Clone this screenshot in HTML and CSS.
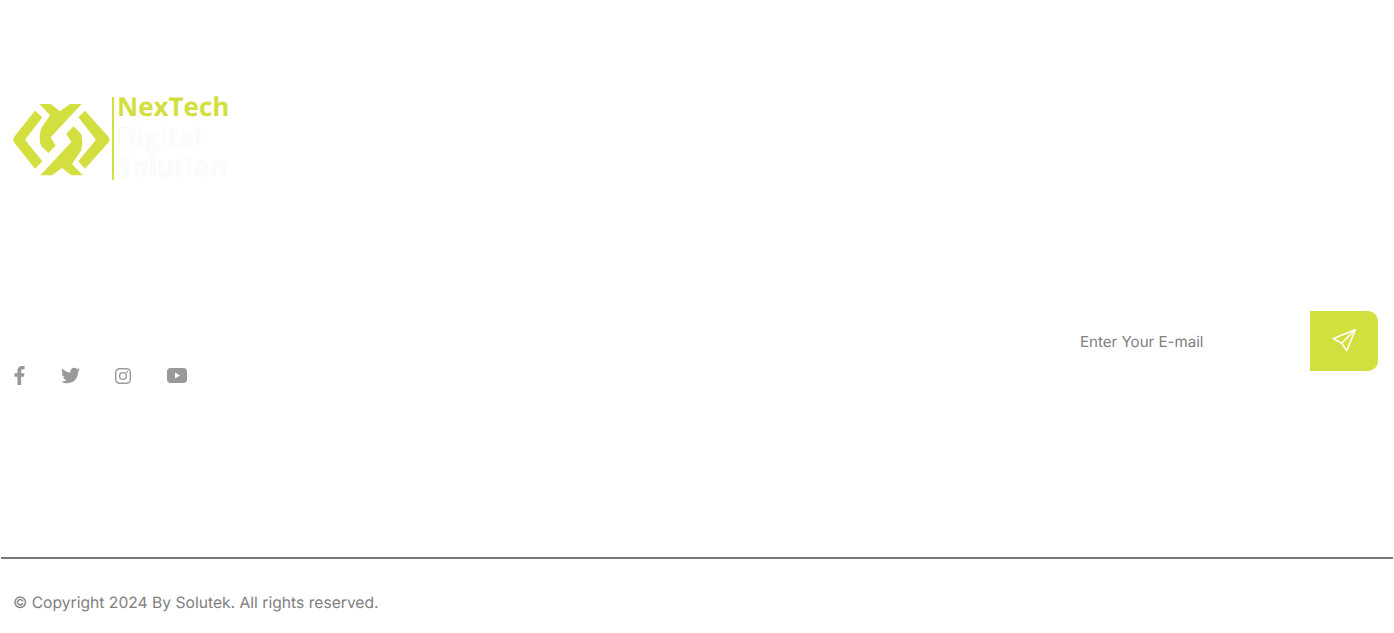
FILE: index.html
```html
<!DOCTYPE html>
<html lang="en">
<head>
    <meta charset="UTF-8">
    <title>Footer</title>
    <link rel="stylesheet" href="styles.css">
</head>
<body>
<footer class="footer">
    <div class="footer-top">
        <div class="footer-left">
            <a class="logo" href="#">
                <svg class="logo-mark" viewBox="6 0 294 246" width="98" height="82">
                    <path class="lime" d="M75 38L97 58 45 125 97 190 75 212 12 133Q8 125 12 117Z"/>
                    <path class="lime" d="M225 38L205 58 258 125 205 190 225 212 296 133Q300 125 296 117Z"/>
                    <path class="lime" d="M88 18H122L150 40 180 18H215L122 118 137 143 115 165 93 143Q85 122 93 92L120 52Z"/>
                    <path class="lime" d="M218 232H184L156 210 126 232H91L184 132 169 107 191 85 213 107Q221 128 213 158L186 198Z"/>
                </svg>
                <div class="logo-text">
                    <div class="logo-name">NexTech</div>
                    <div class="logo-sub">Digital</div>
                    <div class="logo-sub">Solution</div>
                </div>
            </a>
            <div class="social">
                <a href="#" class="social-link">
                    <svg viewBox="0 0 320 512" width="13" height="19"><path d="M279.14 288l14.22-92.66h-88.91v-60.13c0-25.35 12.42-50.06 52.24-50.06h40.42V6.26S260.43 0 225.36 0c-73.22 0-121.08 44.38-121.08 124.72v70.62H22.89V288h81.39v224h100.17V288z"/></svg>
                </a>
                <a href="#" class="social-link">
                    <svg viewBox="0 0 512 512" width="19" height="19"><path d="M459.37 151.716c.325 4.548.325 9.097.325 13.645 0 138.72-105.583 298.558-298.558 298.558-59.452 0-114.68-17.219-161.137-47.106 8.447.974 16.568 1.299 25.34 1.299 49.055 0 94.213-16.568 130.274-44.832-46.132-.975-84.792-31.188-98.112-72.772 6.498.974 12.995 1.624 19.818 1.624 9.421 0 18.843-1.3 27.614-3.573-48.081-9.747-84.143-51.98-84.143-102.985v-1.299c13.969 7.797 30.214 12.67 47.431 13.319-28.264-18.843-46.781-51.005-46.781-87.391 0-19.492 5.197-37.36 14.294-52.954 51.655 63.675 129.3 105.258 216.365 109.807-1.624-7.797-2.599-15.918-2.599-24.04 0-57.828 46.782-104.934 104.934-104.934 30.213 0 57.502 12.67 76.67 33.137 23.715-4.548 46.456-13.32 66.599-25.34-7.798 24.366-24.366 44.833-46.132 57.827 21.117-2.273 41.584-8.122 60.426-16.243-14.292 20.791-32.161 39.308-52.628 54.253z"/></svg>
                </a>
                <a href="#" class="social-link">
                    <svg class="insta" viewBox="0 0 17 17" width="16" height="16">
                        <rect x="0.75" y="0.75" width="15.5" height="15.5" rx="4.2"/>
                        <circle cx="8.5" cy="8.5" r="3.6"/>
                        <circle class="dot" cx="12.9" cy="4.1" r="1"/>
                    </svg>
                </a>
                <a href="#" class="social-link social-yt">
                    <svg viewBox="0 0 20 15" width="20" height="15">
                        <rect width="20" height="15" rx="3.8"/>
                        <path class="play" d="M8 4.600L13 7.500 8 10.400Z"/>
                    </svg>
                </a>
            </div>
        </div>
        <form class="subscribe">
            <input class="subscribe-input" type="text" placeholder="Enter Your E-mail">
            <button class="subscribe-btn" type="button">
                <svg viewBox="0 0 24 24" width="24" height="24"><path d="M23.500 0.500L1.500 9.500 9.700 14.300 14.700 21.700ZM23.500 0.500L9.700 14.300"/></svg>
            </button>
        </form>
    </div>
    <div class="footer-bottom">
        <p class="copyright">© Copyright 2024 By Solutek. All rights reserved.</p>
    </div>
</footer>
</body>
</html>
```

FILE: styles.css
```css
html, body{
    margin: 0;
    background-color: #fff;
    overflow: hidden;
}
.footer{
    font-family: Inter, "Liberation Sans", sans-serif;
    text-rendering: geometricPrecision;
    height: 633px;
}
.footer-top{
    display: flex;
    justify-content: space-between;
    align-items: flex-start;
    height: 557px;
    box-sizing: border-box;
    padding: 93px 16px 0 12px;
}
.logo{
    display: flex;
    align-items: flex-start;
    text-decoration: none;
}
.logo-mark{
    flex: none;
    margin-top: 5px;
}
.lime{
    fill: #d3df3e;
}
.logo-text{
    margin: 4px 0 0 2px;
    padding-left: 3px;
    border-left: 2px solid #d3df3e;
    height: 83px;
    font-family: "Open Sans", sans-serif;
}
.logo-name{
    margin-top: -6px;
    font-size: 26px;
    font-weight: 700;
    line-height: 30px;
    color: #d3df3e;
}
.logo-sub{
    font-size: 26px;
    font-weight: 400;
    line-height: 30px;
    letter-spacing: 1.4px;
    color: #fff;
    text-shadow: 0 0 1px rgba(0, 0, 0, .12);
}
.social{
    display: flex;
    align-items: center;
    gap: 35px;
    margin: 186px 0 0 1px;
}
.social-link{
    display: block;
    line-height: 0;
}
.social-yt{
    margin-left: 1px;
}
.social-link svg{
    fill: #999;
}
.social-link .insta{
    fill: none;
    stroke: #999;
    stroke-width: 1.5;
}
.social-link .insta .dot{
    fill: #999;
    stroke: none;
}
.social-link .play{
    fill: #fff;
}
.subscribe{
    display: flex;
    margin-top: 218px;
    height: 60px;
}
.subscribe-input{
    width: 230px;
    padding: 0 0 0 20px;
    border: none;
    background-color: #fff;
    font-family: inherit;
    font-size: 15.1px;
    text-rendering: geometricPrecision;
    color: #808080;
}
.subscribe-input::placeholder{
    color: #808080;
    opacity: 1;
}
.subscribe-input:focus{
    outline: none;
}
.subscribe-btn{
    display: flex;
    align-items: center;
    justify-content: center;
    width: 68px;
    height: 60px;
    padding: 0;
    border: none;
    border-radius: 0 10px 10px 0;
    background-color: #d3df3e;
}
.subscribe-btn svg{
    fill: none;
    stroke: #fff;
    stroke-width: 1.5;
    stroke-linejoin: round;
}
.footer-bottom{
    margin: 0 1px;
    border-top: 2px solid #777;
}
.copyright{
    margin: 0;
    padding: 34px 0 0 12px;
    font-size: 15.65px;
    line-height: 20px;
    color: #808080;
}
```
